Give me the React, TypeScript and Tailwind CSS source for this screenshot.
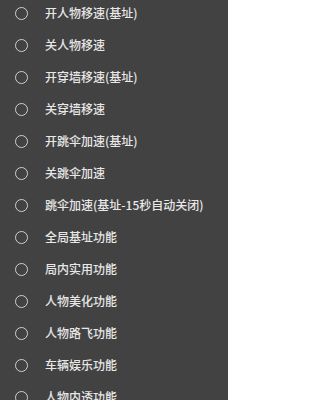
import React from 'react';

const items = [
  '开人物移速(基址)',
  '关人物移速',
  '开穿墙移速(基址)',
  '关穿墙移速',
  '开跳伞加速(基址)',
  '关跳伞加速',
  '跳伞加速(基址-15秒自动关闭)',
  '全局基址功能',
  '局内实用功能',
  '人物美化功能',
  '人物路飞功能',
  '车辆娱乐功能',
  '人物内透功能',
];

const App: React.FC = () => {
  return (
    <div
      className="h-[400px] w-[228px] overflow-hidden bg-[#424242]"
      style={{ fontFamily: '"Noto Sans CJK SC", "Noto Sans", sans-serif' }}
    >
      <ul className="-mt-[3px]">
        {items.map((label) => (
          <li key={label} className="flex h-[32px] items-center">
            <span className="ml-[15px] h-[13px] w-[13px] shrink-0 rounded-full border-[1.5px] border-[#d0d0d0]" />
            <span className="ml-[17px] whitespace-nowrap text-[12px] font-medium text-[#e8e8e8]">{label}</span>
          </li>
        ))}
      </ul>
    </div>
  );
};

export default App;
